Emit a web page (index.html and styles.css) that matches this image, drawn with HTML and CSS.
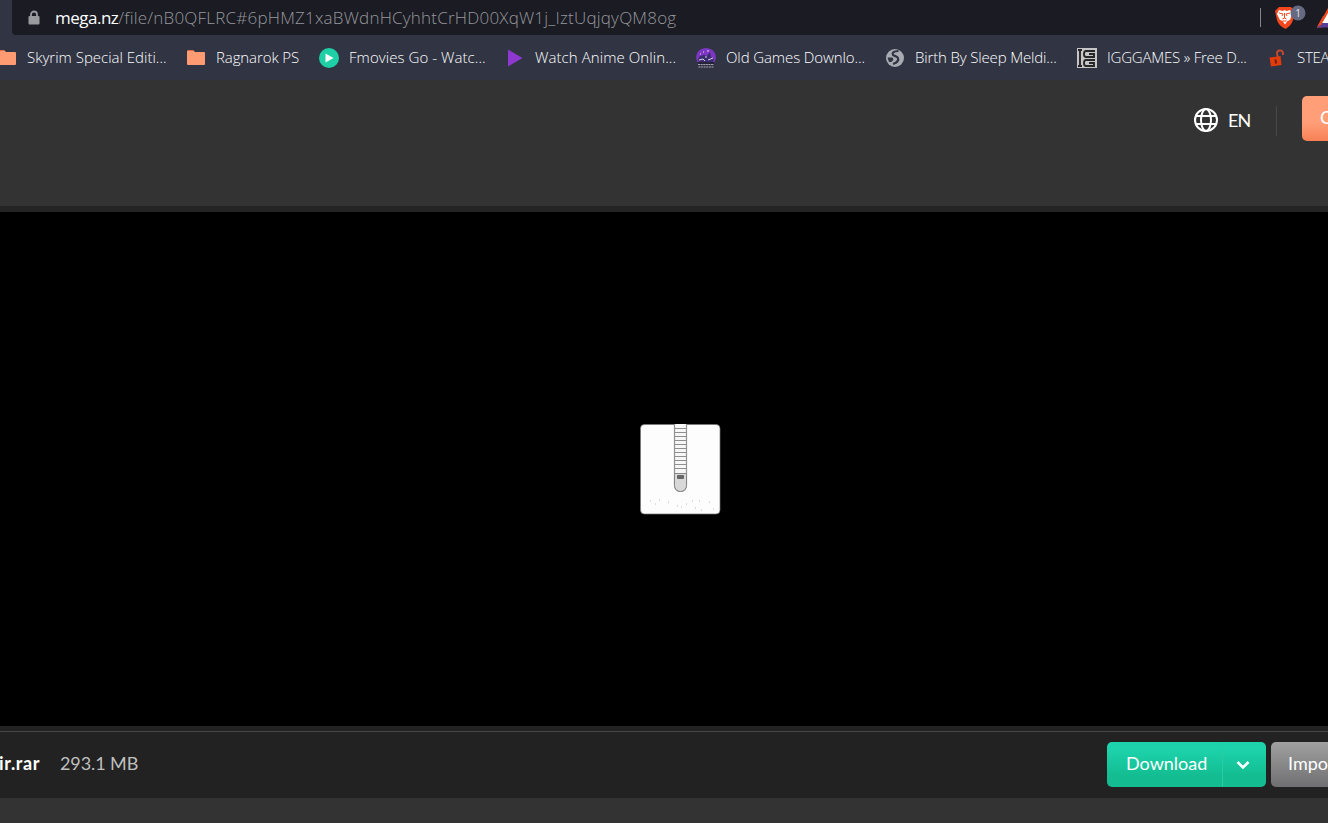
FILE: index.html
```
<!DOCTYPE html>
<html lang="en">
<head>
<meta charset="utf-8">
<title>MEGA</title>
<link rel="stylesheet" href="styles.css">
</head>
<body>
<div class="page">
  <div class="toolbar">
    <div class="address">
      <svg class="lock" width="12" height="16" viewBox="0 0 12 16"><path d="M3 7V4.500a3 3 0 0 1 6 0V7" fill="none" stroke="#999a9d" stroke-width="1.800"/><rect x=".5" y="6" width="11" height="8.500" rx="1" fill="#999a9d"/></svg>
      <div class="url"><span class="host">mega.nz</span><span class="path">/file/nB0QFLRC#6pHMZ1xaBWdnHCyhhtCrHD00XqW1j_IztUqjqyQM8og</span></div>
      <div class="extensions">
        <span class="bar"></span>
        <svg width="68" height="32" viewBox="1260 2 68 32">
          <path d="M1279 7h12l3 4-1 9c-1 4-4 7-7.500 9-4.500-2-7.500-5-8.500-9l-2-9z" fill="#f4471d"/>
          <path d="M1279 10l3.500 1 2-1 2 1 3.500-1 2 4-2 6-2.500 1-2.500 3.500-2.500-3.500-2.500-1-3-6z" fill="#fff"/>
          <path d="M1279 13l4 1-1 2m8-3-4 1 1 2m-2.500-3v5l-2 1m2-1 2 1m-4 2h4" fill="none" stroke="#f4471d" stroke-width="1"/>
          <circle cx="1298" cy="13" r="7.500" fill="#666a80"/>
          <text x="1298" y="16.500" class="count" text-anchor="middle">1</text>
          <path d="M1317 27.500L1328 8v7l-6 12.500z" fill="#f4471d"/><path d="M1322 23l6-10v10z" fill="#fff"/><path d="M1316.500 27.500l4-4.500h8v4.500z" fill="#5a3f96"/><path d="M1317 27l6-11h3l-5 9z" fill="#e8491f"/>
        </svg>
      </div>
    </div>
  </div>
  <div class="bookmarks">
    <div class="mark m1"><svg class="ico" viewBox="0 0 20 20"><path d="M1 4q0-2 1.500-2H7l2 2h9q1 0 1 1v11q0 1-1 1H2q-1 0-1-1z" fill="#ff9b73"/><path d="M2 2.500h5" stroke="#ee6941"/></svg><span>Skyrim Special Editi...</span></div>
    <div class="mark m2"><svg class="ico" viewBox="0 0 20 20"><path d="M1 4q0-2 1.500-2H7l2 2h9q1 0 1 1v11q0 1-1 1H2q-1 0-1-1z" fill="#ff9b73"/><path d="M2 2.500h5" stroke="#ee6941"/></svg><span>Ragnarok PS</span></div>
    <div class="mark m3"><svg class="ico" viewBox="0 0 20 20"><circle cx="10" cy="10" r="10" fill="#1fd0a6"/><path d="M6.500 5.500l8 4.500-8 4.500z" fill="#fff"/></svg><span>Fmovies Go - Watc...</span></div>
    <div class="mark m4"><svg class="ico" viewBox="0 0 20 20"><path d="M3 1.500l14.500 8.500L3 18.500z" fill="#8e38cf"/></svg><span>Watch Anime Onlin...</span></div>
    <div class="mark m5"><svg class="ico" viewBox="0 0 20 20"><path d="M2 15C-3 7 3 0 10 0s13 7 8 15z" fill="#7e36c4"/><path d="M4 8l4-1 3 1 3-4 1 5 3 2-1 3H3l-1-3z" fill="#3c2c70"/><path d="M4 6h1m2-2h1m3-1h2M3 12l4-1 2 2m3-1 5-2M9 9h2" fill="none" stroke="#ded4e7"/><path d="M2 14h16v2H2z" fill="#25243a"/><path d="M2 16.500h16M2.500 19h15" stroke="#aaa2b4" stroke-width="1.200" stroke-dasharray="2 .6"/></svg><span>Old Games Downlo...</span></div>
    <div class="mark m6"><svg class="ico" viewBox="0 0 20 20"><circle cx="10" cy="10" r="9" fill="#a8abb2"/><path d="M13.500 3C8 3 7 5 8 7c1 1 4 1 5 3 1 3-2 5-5 6" fill="none" stroke="#303443" stroke-width="2.200"/><path d="M2.500 9.500h5l1 2-2 2.500H4z" fill="#303443"/></svg><span>Birth By Sleep Meldi...</span></div>
    <div class="mark m7"><svg class="ico" viewBox="0 0 20 20"><path d="M0 0h20v20H0z" fill="#c6c6c6"/><path d="M1 2h4M1 18h4M3 2v16M18 3H9q-2 0-2 3t2 3h8V6h-5M18 12H9q-2 0-2 3t2 3h8v-3h-5" fill="none" stroke="#26262a" stroke-width="1.900"/></svg><span>IGGGAMES » Free D...</span></div>
    <div class="mark m8"><svg class="ico" viewBox="0 0 20 20"><path d="M2.500 9.500l11-1.500 1 9-10.500 1.500z" fill="#e23b0c"/><path d="M11 9l-1-3c-.5-4 5-5 6-1v2" fill="none" stroke="#c94a2c" stroke-width="1.800"/><path d="M8.500 11.500l.5 4" stroke="#682012" stroke-width="2"/></svg><span>STEA</span></div>
  </div>
  <header class="header">
    <svg width="26" height="26" viewBox="0 0 26 26" fill="none" stroke="#fff" stroke-width="2"><circle cx="13" cy="13" r="11"/><ellipse cx="13" cy="13" rx="5" ry="11"/><path d="M3 9h20M3 17h20"/></svg>
    <span class="lang">EN</span>
    <span class="divider"></span>
    <button class="create">C</button>
  </header>
  <main class="preview">
    <svg width="82" height="92" viewBox="0 0 82 92">
      <rect x="1.500" y="1.500" width="79.500" height="89.500" rx="4" fill="#fdfdfd" stroke="#777" stroke-width=".7"/>
      <path d="M35.500 1v61.500a6 6 0 0 0 12 0V1" fill="#f7f7f7" stroke="#929292" stroke-width="1.200"/>
      <path d="M36 5.500h11M36 9.500h11M36 13.500h11M36 17.500h11M36 21.500h11M36 25.500h11M36 29.500h11M36 33.500h11M36 37.500h11M36 41.500h11M36 45.500h11" stroke="#8f8f8f"/>
      <path d="M35.500 50.500h12v12a6 6 0 0 1-12 0z" fill="#d8d8d8" stroke="#858585"/><rect x="38" y="52" width="7" height="4" rx="1" fill="#666"/>
      <path d="M11 78h1m4 3h1m3-4h1m8 2h1m8 4h1m3 1h1m4-3h1m5-3h1m6 0h1m-5 7h1m13-6h1m3 7h1m-13 1h1" stroke="#bbb"/>
    </svg>
  </main>
  <footer class="footer">
    <span class="name">ir.rar</span><span class="size">293.1 MB</span>
    <div class="download"><span class="dl">Download</span><span class="more"><svg width="14" height="10" viewBox="0 0 14 10"><path d="M1.500 2L7 7.500 12.500 2" fill="none" stroke="#fff" stroke-width="2.500"/></svg></span></div>
    <div class="import">Impo</div>
  </footer>
</div>
</body>
</html>
```
FILE: styles.css
```
* { box-sizing: border-box; }
body { margin: 0; background: #333; font-family: Lato, sans-serif; }
.page { width: 1328px; height: 823px; overflow: hidden; display: flex; flex-direction: column; }
.page > * { flex-shrink: 0; }
.toolbar { height: 35px; background: #303443; padding-left: 12px; }
.address { height: 35px; background: #1a1b23; border-radius: 0 0 0 4px; display: flex; align-items: center; padding-left: 17px; font-family: "Open Sans", "Noto Sans", sans-serif; }
.lock { flex: none; margin: 1px 1px 0 -1px; }
.url { width: 640px; margin-left: 14px; font-size: 17px; font-weight: 300; line-height: 34px; white-space: nowrap; }
.host { color: #fff; font-weight: 400; letter-spacing: -.5px; }
.path { color: #96979b; letter-spacing: .21px; }
.extensions { margin-left: auto; display: flex; align-items: center; width: 69px; }
.bar { flex: none; width: 1px; height: 19px; margin: 0 -1px 0 1px; background: #85868b; }
.extensions svg { flex: none; }
.count { font: 10px "Open Sans", sans-serif; fill: #e1e2eb; }
.bookmarks { height: 45px; background: #303443; display: flex; align-items: center; color: #fff; font: 300 15px/24px "Open Sans", "Noto Sans", sans-serif; white-space: nowrap; margin-left: -3px; width: 1331px; overflow: hidden; }
.mark { flex: none; display: flex; align-items: center; gap: 10px; }
.mark span { margin-top: -2px; }
.ico { width: 20px; height: 20px; flex: none; }
.m1 { width: 189px; }
.m2 { width: 133px; letter-spacing: -.1px; }
.m3 { width: 186px; letter-spacing: .06px; }
.m4 { width: 191px; letter-spacing: .08px; }
.m5 { width: 189px; letter-spacing: -.1px; }
.m6 { width: 192px; letter-spacing: -.15px; }
.m7 { width: 190px; letter-spacing: -.22px; }
.m8 { letter-spacing: -.3px; }
.header { height: 126px; background: #333; display: flex; align-items: flex-start; padding: 16px 0 0 1193px; color: #fff; }
.header svg { flex: none; margin-top: 11px; }
.lang { width: 48px; flex: none; margin-left: 9px; font-size: 18px; line-height: 48px; letter-spacing: -.8px; }
.divider { flex: none; width: 1px; height: 30px; margin-top: 10px; background: #484848; }
.create { flex: none; width: 180px; height: 45px; margin-left: 25px; padding: 0 0 3px 18px; border: 0; border-radius: 5px; background: linear-gradient(#ff9e77 60%, #f78055); color: #fff; font: 18px Lato, sans-serif; text-align: left; }
.preview { height: 520px; background: #000; border-top: 6px solid #242424; display: flex; padding: 211px 0 0 639px; }
.footer { height: 72px; border-top: 5px solid #222; background: linear-gradient(#484848 1px, #222 1px); display: flex; align-items: flex-start; padding-top: 11px; color: #fff; font-size: 18px; line-height: 43px; white-space: nowrap; }
.name { flex: none; width: 61px; font-weight: 700; margin-left: -1px; letter-spacing: .65px; }
.size { flex: none; width: 1047px; color: #bfbfbf; font-weight: 400; letter-spacing: -.1px; }
.download { flex: none; width: 159px; height: 45px; border-radius: 5px; background: linear-gradient(#1dd3ab 15%, #13bd91 75%); display: flex; }
.dl { width: 116px; padding-left: 19px; border-right: 1px solid #28cba4; }
.more { flex: 1; display: flex; align-items: center; justify-content: center; padding-right: 3px; }
.import { flex: none; width: 150px; height: 45px; margin-left: 5px; padding-left: 17px; border-radius: 5px; background: linear-gradient(#a0a0a0, #707072); }
```
